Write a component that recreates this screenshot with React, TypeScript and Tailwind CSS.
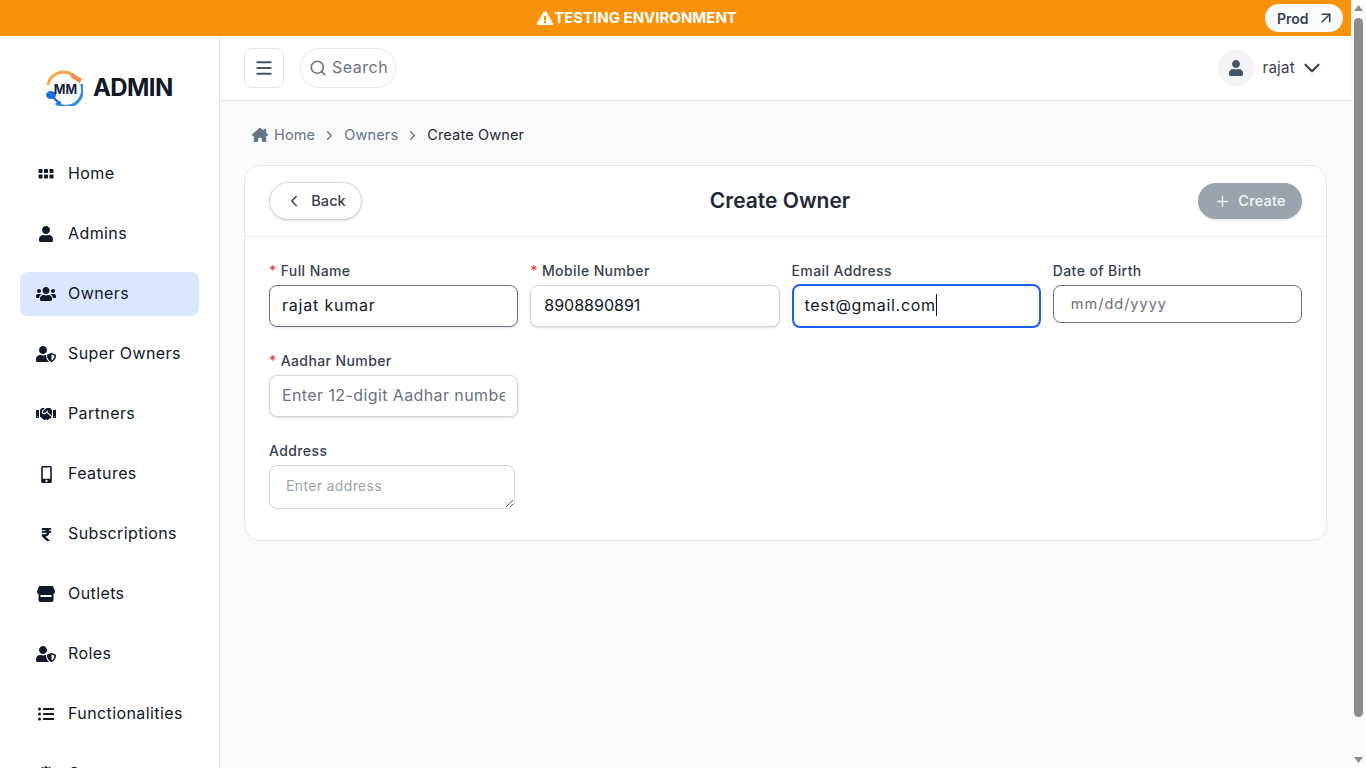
import React from 'react';
import {
  FaExclamationTriangle,
  FaUser,
  FaUsers,
  FaUserShield,
  FaHandshake,
  FaMobileAlt,
  FaRupeeSign,
  FaListUl,
  FaGlobe,
} from 'react-icons/fa';
import { FaHouseChimney } from 'react-icons/fa6';
import { ArrowUpRight, ChevronDown, ChevronLeft, ChevronRight, Menu, Plus, Search } from 'lucide-react';

const GridIcon = () => (
  <svg width="16" height="16" viewBox="0 0 16 16" fill="currentColor">
    <rect x="0.5" y="3" width="4" height="4" rx="0.8" />
    <rect x="6" y="3" width="4" height="4" rx="0.8" />
    <rect x="11.5" y="3" width="4" height="4" rx="0.8" />
    <rect x="0.5" y="8.5" width="4" height="4" rx="0.8" />
    <rect x="6" y="8.5" width="4" height="4" rx="0.8" />
    <rect x="11.5" y="8.5" width="4" height="4" rx="0.8" />
  </svg>
);

const StoreIcon = () => (
  <svg width="18" height="16" viewBox="0 0 18 16" fill="currentColor">
    <path d="M3 0 H15 Q16 0 16.4 1 L18 5 V6 Q18 8 16 8 H2 Q0 8 0 6 V5 L1.6 1 Q2 0 3 0 Z" />
    <path d="M1.5 8 H16.5 V14 Q16.5 16 14.5 16 H3.5 Q1.5 16 1.5 14 Z M3.5 9 V11 H14.5 V9 Z" fillRule="evenodd" />
  </svg>
);

const Logo = () => (
  <svg width="38" height="36" viewBox="0 0 38 36" fill="none">
    <path d="M3 15 A16 16 0 0 1 28 5" stroke="#f9a54a" strokeWidth="3" />
    <path d="M27 3 L37 9 L34.5 13 L25.5 7 Z" fill="#f08a4b" />
    <path d="M36.5 14 A16.5 16.5 0 0 1 11 33" stroke="#2f8de8" strokeWidth="3" />
    <ellipse cx="6" cy="25" rx="5" ry="4" fill="#1d6fe0" />
    <path d="M8 27 Q11 31 16 33.5" stroke="#1d6fe0" strokeWidth="2.2" />
    <text x="20.5" y="23.5" textAnchor="middle" fontSize="12.5" fontWeight="700" fontFamily="Inter, sans-serif" fill="#14233c">
      MM
    </text>
  </svg>
);

const navItems = [
  { label: 'Home', icon: <GridIcon /> },
  { label: 'Admins', icon: <FaUser size={16} /> },
  { label: 'Owners', icon: <FaUsers size={20} />, active: true },
  { label: 'Super Owners', icon: <FaUserShield size={20} /> },
  { label: 'Partners', icon: <FaHandshake size={20} /> },
  { label: 'Features', icon: <FaMobileAlt size={17} /> },
  { label: 'Subscriptions', icon: <FaRupeeSign size={15} /> },
  { label: 'Outlets', icon: <StoreIcon /> },
  { label: 'Roles', icon: <FaUserShield size={20} /> },
  { label: 'Functionalities', icon: <FaListUl size={16} /> },
  { label: 'Country', icon: <FaGlobe size={16} /> },
];

const Label = ({ text, required }: { text: string; required?: boolean }) => (
  <label className="mb-1 block h-[20px] text-[14px] leading-[20px] font-medium tracking-[0.4px] text-[#374151]">
    {required && <span className="mr-1 text-[#ef4444]">*</span>}
    {text}
  </label>
);

const App: React.FC = () => {
  return (
    <div className="flex h-screen overflow-hidden font-['Inter',sans-serif] text-[#111827]">
      <div className="min-w-0 flex-1">
        {/* Testing banner */}
        <div className="relative flex h-[36px] items-center justify-center bg-[#f9920b] pr-[77px]">
          <div className="flex items-center gap-[1px] text-[15px] font-bold text-white">
            <FaExclamationTriangle size={16} />
            <span>TESTING ENVIRONMENT</span>
          </div>
          <button className="absolute top-[4px] right-[8px] flex h-[28px] w-[78px] items-center gap-[8px] rounded-full bg-[#f8fafc] pl-[12px] text-[14px] font-semibold text-[#374151]">
            Prod
            <ArrowUpRight size={18} />
          </button>
        </div>

        <div className="flex h-screen bg-[#f9fafb]">
          {/* Sidebar */}
          <aside className="flex w-[220px] shrink-0 flex-col overflow-hidden border-r border-[#e5e7eb] bg-white">
            <div className="flex h-[102px] shrink-0 items-center gap-[10px] pt-[2px] pl-[45px]">
              <Logo />
              <span className="text-[24px] font-bold tracking-tight text-[#111827]">ADMIN</span>
            </div>
            <nav className="flex flex-col gap-[16px] px-[20px] pt-[14px]">
              {navItems.map((item) => (
                <div
                  key={item.label}
                  className={`flex h-[44px] shrink-0 items-center rounded-lg ${item.active ? 'bg-[#dbe7fe]' : ''}`}
                >
                  <span className="flex w-[48px] shrink-0 justify-center pl-[4px] text-[#111827]">{item.icon}</span>
                  <span className="-mt-[2px] text-[16px] tracking-[0.4px] text-[#111827]">{item.label}</span>
                </div>
              ))}
            </nav>
          </aside>

          {/* Main */}
          <main className="min-w-0 flex-1">
            <header className="flex h-[65px] items-center border-b border-[#e5e7eb] bg-white pr-[26px] pl-[24px]">
              <button className="flex h-[40px] w-[40px] items-center justify-center rounded-lg border border-[#e5e7eb] text-[#4b5563]">
                <Menu size={20} strokeWidth={2.4} />
              </button>
              <div className="ml-[16px] flex h-[40px] w-[96px] items-center gap-[5px] rounded-full border border-[#e5e7eb] pl-[8px] text-[#6b7280]">
                <Search size={18} strokeWidth={2.2} />
                <span className="-mt-[3px] text-[16px] tracking-[0.5px]">Search</span>
              </div>
              <div className="ml-auto flex items-center">
                <div className="flex h-[36px] w-[36px] items-center justify-center rounded-full bg-[#f3f4f6] text-[#475569]">
                  <FaUser size={16} />
                </div>
                <span className="ml-[8px] text-[15px] tracking-[0.3px] text-[#374151]">rajat</span>
                <ChevronDown size={26} className="ml-[4px] text-[#374151]" />
              </div>
            </header>

            <div className="px-[24px] pt-[24px]">
              {/* Breadcrumb */}
              <div className="flex h-[20px] items-center pl-[8px] text-[14.5px] tracking-[0.15px] text-[#64748b]">
                <FaHouseChimney size={16} className="text-[#64748b]" />
                <span className="ml-[6px]">Home</span>
                <ChevronRight size={15} className="mx-[7px]" />
                <span>Owners</span>
                <ChevronRight size={15} className="mx-[7px]" />
                <span className="text-[#1f2937]">Create Owner</span>
              </div>

              {/* Card */}
              <section className="mt-[20px] h-[376px] rounded-2xl border border-[#e5e7eb] bg-white">
                <div className="flex h-[71px] items-center justify-between border-b border-[#e5e7eb] px-[24px]">
                  <button className="flex h-[38px] w-[93px] items-center justify-center gap-[8px] rounded-full border border-[#d1d5db] bg-white text-[14.5px] font-medium tracking-[0.1px] text-[#374151] shadow-sm">
                    <ChevronLeft size={18} />
                    Back
                  </button>
                  <h1 className="text-[21px] font-semibold text-[#1f2937]">Create Owner</h1>
                  <button className="flex h-[36px] w-[104px] items-center justify-center gap-[7px] rounded-full bg-[#9ca3af] text-[14.5px] font-medium tracking-[0.2px] text-[#f3f4f6] shadow-sm">
                    <Plus size={17} />
                    Create
                  </button>
                </div>

                <div className="grid grid-cols-4 gap-x-[12px] px-[24px] pt-[24px]">
                  <div>
                    <Label text="Full Name" required />
                    <input
                      readOnly
                      value="rajat kumar"
                      className="h-[42px] w-full rounded-lg border border-[#6b7280] bg-white px-[12px] pb-[2px] text-[16px] tracking-[0.8px] text-[#111827] shadow-sm outline-none"
                    />
                  </div>
                  <div>
                    <Label text="Mobile Number" required />
                    <input
                      readOnly
                      value="8908890891"
                      className="h-[42px] w-full rounded-lg border border-[#d1d5db] bg-white px-[13px] pb-[2px] text-[16px] text-[#111827] shadow-sm outline-none"
                    />
                  </div>
                  <div>
                    <Label text="Email Address" />
                    <div className="-mt-px flex h-[44px] w-full items-center rounded-lg border-2 border-[#1d5cf5] bg-white pb-[2px] pl-[11px] text-[16px] tracking-[0.7px] text-[#111827]">
                      test@gmail.com
                      <span className="h-[22px] w-px bg-[#111827]" />
                    </div>
                  </div>
                  <div>
                    <Label text="Date of Birth" />
                    <div className="flex h-[38px] w-full items-center rounded-lg border border-[#6b7280] bg-white pl-[17px] text-[14.5px] tracking-[1px] text-[#6b7280]">
                      mm/dd/yyyy
                    </div>
                  </div>
                </div>

                <div className="mt-[23px] ml-[24px] w-[249px]">
                  <Label text="Aadhar Number" required />
                  <input
                    readOnly
                    placeholder="Enter 12-digit Aadhar number"
                    className="h-[42px] w-full rounded-lg border border-[#d1d5db] bg-white px-[12px] pb-[2px] text-[16px] tracking-[0.4px] shadow-sm outline-none placeholder:text-[#6b7280]"
                  />
                </div>

                <div className="mt-[24px] ml-[24px] w-[246px]">
                  <Label text="Address" />
                  <textarea
                    readOnly
                    rows={2}
                    placeholder="Enter address"
                    className="block h-[44px] w-[246px] rounded-lg border border-[#d1d5db] bg-white px-[16px] py-[10px] text-[14px] leading-[20px] tracking-[0.35px] outline-none placeholder:text-[#9ca3af]"
                  />
                </div>
              </section>
            </div>
          </main>
        </div>
      </div>

      {/* Browser scrollbar */}
      <div className="flex w-[15px] shrink-0 flex-col items-center bg-[#fbfbfb] pt-[5px]">
        <svg width="9" height="6" viewBox="0 0 9 6" fill="#8c8c8c">
          <path d="M4.5 0 L9 6 L0 6 Z" />
        </svg>
        <div className="mt-[7px] h-[699px] w-[9px] rounded-full bg-[#8c8c8c]" />
        <svg width="9" height="6" viewBox="0 0 9 6" fill="#8c8c8c" className="mt-[40px]">
          <path d="M0 0 L9 0 L4.5 6 Z" />
        </svg>
      </div>
    </div>
  );
};

export default App;
